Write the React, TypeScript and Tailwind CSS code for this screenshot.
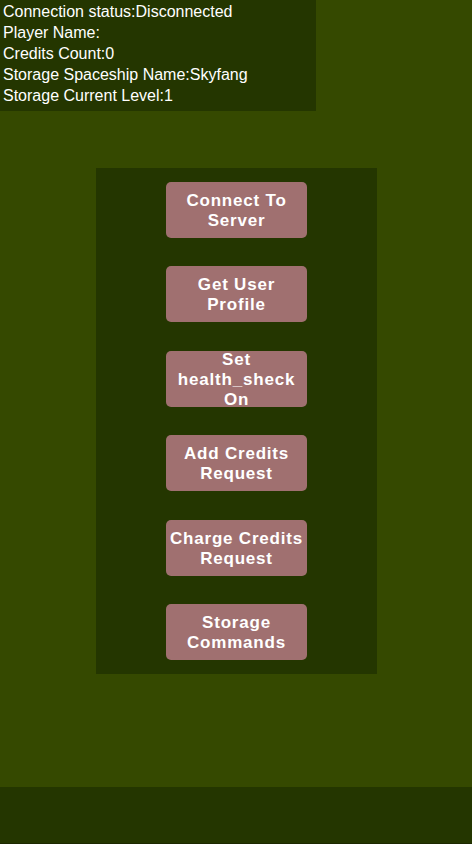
import React from "react";

const buttons = [
  ["Connect To", "Server"],
  ["Get User", "Profile"],
  ["Set", "health_sheck", "On"],
  ["Add Credits", "Request"],
  ["Charge Credits", "Request"],
  ["Storage", "Commands"],
];

export default function App() {
  return (
    <div
      className="w-[472px] h-[844px] bg-[#354900] flex flex-col overflow-hidden"
      style={{ fontFamily: '"Liberation Sans", Arial, sans-serif' }}
    >
      <div className="flex-1 flex flex-col">
        <div className="w-[316px] h-[111px] bg-[#243600] pl-[3px] pt-[1px] text-white text-[16px] leading-[21px]">
          <div>Connection status:Disconnected</div>
          <div>Player Name:</div>
          <div>Credits Count:0</div>
          <div>Storage Spaceship Name:Skyfang</div>
          <div>Storage Current Level:1</div>
        </div>
        <div className="mt-[57px] ml-[96px] w-[281px] h-[506px] bg-[#243600] flex flex-col items-center pt-[14px] gap-[28.4px]">
          {buttons.map((lines, i) => (
            <div
              key={i}
              className="w-[141px] h-[56px] rounded-[5px] bg-[#a07070] flex flex-col items-center justify-center pt-[2px] text-white font-bold text-[17px] leading-[20px] tracking-[0.8px] text-center"
            >
              {lines.map((l, j) => (
                <div key={j} className="whitespace-nowrap">{l}</div>
              ))}
            </div>
          ))}
        </div>
      </div>
      <div className="h-[57px] bg-[#243600] border-b border-[#1c2900]" />
    </div>
  );
}
